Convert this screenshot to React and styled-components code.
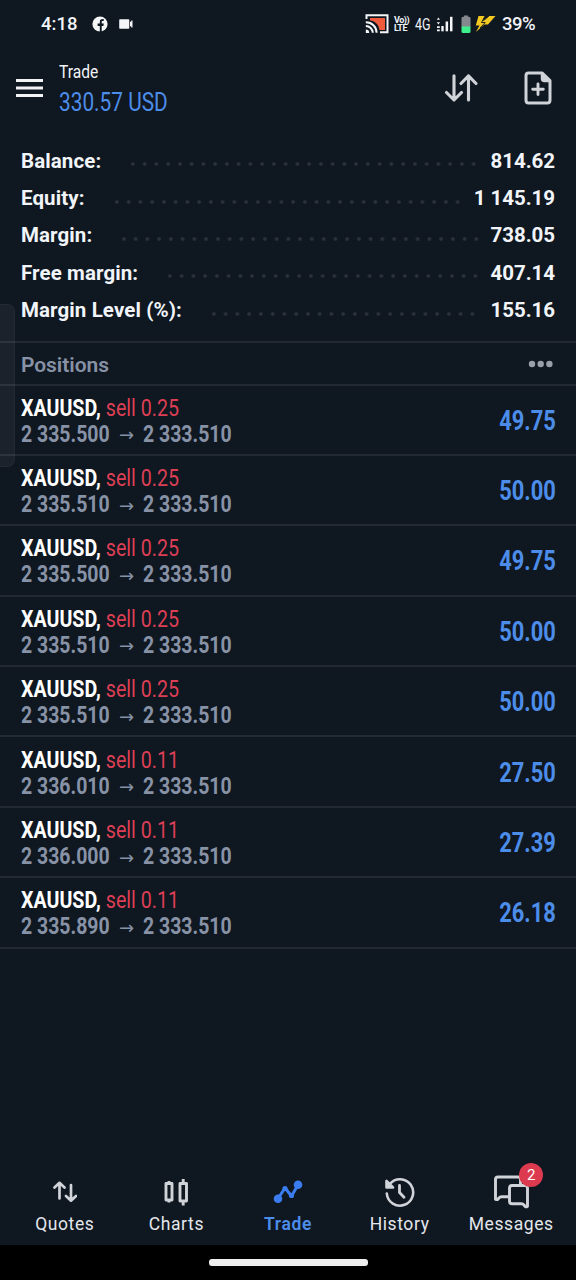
import styled, { createGlobalStyle } from 'styled-components';

const GlobalStyle = createGlobalStyle`
* {
  box-sizing: border-box;
}
body {
  margin: 0;
  background-color: #0f1720;
  font-family: Roboto, sans-serif;
}
`

const Screen = styled.div`
width: 576px;
height: 1280px;
display: flex;
flex-direction: column;
background-color: #0f1720;
color: #f1f4f8;
overflow: hidden;
position: relative;
`

/* Narrow text: the regular face squeezed horizontally */
const Narrow = styled.span`
display: block;
width: max-content;
white-space: pre;
transform: scaleX(${(p) => p.$squeeze});
transform-origin: ${(p) => p.$origin || 'left'} center;
`

const StatusBar = styled.div`
height: 48px;
display: flex;
justify-content: space-between;
padding: 0 41px;
`

const StatusGroup = styled.div`
display: flex;
align-items: center;
height: 48px;
`

const Clock = styled.span`
font-size: 18.5px;
font-weight: 500;
margin-right: 16px;
width: 35px;
`

const Volte = styled.div`
width: 16px;
margin-left: 5px;
font-size: 9px;
line-height: 8px;
font-weight: 700;
letter-spacing: -0.5px;
`

const Network = styled.span`
font-size: 16px;
margin: 0 4px 0 5px;
width: 17px;
`

const Percent = styled.span`
font-size: 18.5px;
margin-left: 6px;
width: 33px;
white-space: nowrap;
letter-spacing: -0.5px;
font-weight: 500;
`

const Header = styled.header`
height: 94px;
display: flex;
align-items: flex-start;
padding: 0 24px 0 16px;
`

const HeaderText = styled.div`
flex: 1;
margin-left: 16px;
`

const HeaderTitle = styled.div`
font-size: 19px;
line-height: 24px;
margin-top: 12px;
`

const HeaderProfit = styled.div`
font-size: 25px;
line-height: 30px;
margin-top: 4px;
color: #4d8dea;
`

const Summary = styled.section`
height: 199px;
padding: 0 21px;
`

const SummaryRow = styled.div`
height: 37.4px;
display: flex;
align-items: center;
font-size: 20.5px;
font-weight: 700;
`

const SummaryLabel = styled.span`
letter-spacing: 0.1px;
`

const SummaryValue = styled.span`
letter-spacing: -0.05px;
`

const Dots = styled.div`
flex: 1;
height: 6px;
margin: 7px 12px 0 26px;
background-image: radial-gradient(circle at center, #2b323b 1.3px, transparent 2.3px);
background-size: 11.75px 6px;
`

const SectionHeader = styled.div`
height: 44.5px;
display: flex;
align-items: center;
justify-content: space-between;
padding: 2px 23px 0 21px;
border-top: 2px solid #222932;
border-bottom: 2px solid #222932;
color: #8792a6;
font-size: 21px;
font-weight: 600;
`

const SectionTitle = styled.span`
padding-top: 1px;
letter-spacing: -0.05px;
`

const Position = styled.div`
height: 70.4px;
display: flex;
justify-content: space-between;
align-items: center;
padding: 2px 20px 0 21px;
border-bottom: 2px solid #222932;
`

const Deal = styled.div`
font-size: 23.5px;
line-height: 26px;
`

const Symbol = styled.b`
color: #fff;
`

const Side = styled.span`
color: #dc3f55;
`

const Prices = styled.div`
display: flex;
align-items: center;
font-size: 23.5px;
line-height: 26px;
font-weight: 700;
color: #8792a6;
`

const Price = styled.div`
width: 89px;
`

const Arrow = styled.span`
width: 33px;
padding: 3px 0 0 9px;
font-size: 18px;
line-height: 20px;
font-family: "DejaVu Sans", sans-serif;
font-weight: 400;
`

const Profit = styled.div`
font-size: 27px;
font-weight: 700;
color: #4d8dea;
`

const TabBar = styled.nav`
height: 95px;
margin-top: auto;
display: flex;
padding: 0 9px;
`

const Tab = styled.div`
flex: 1;
display: flex;
flex-direction: column;
align-items: center;
color: ${(p) => (p.$active ? '#4d8dea' : '#e3e7ec')};
font-size: 17.5px;
font-weight: ${(p) => (p.$active ? 600 : 400)};
letter-spacing: 0.6px;
`

const TabIcon = styled.div`
height: 40px;
margin-top: 22px;
margin-bottom: 2px;
display: flex;
align-items: center;
position: relative;
`

const Badge = styled.span`
position: absolute;
top: -9px;
right: -14px;
width: 24px;
height: 24px;
border-radius: 50%;
background-color: #dc3a4e;
color: #fff;
font-size: 15px;
line-height: 24px;
letter-spacing: 0;
text-align: center;
`

const HomeArea = styled.div`
height: 35px;
background-color: #000;
display: flex;
justify-content: center;
padding-top: 14px;
`

const HomeBar = styled.div`
width: 159px;
height: 6.5px;
border-radius: 3px;
background-color: #efefef;
`

const EdgePanel = styled.div`
position: absolute;
left: -10px;
top: 304px;
width: 25px;
height: 163px;
border-radius: 8px;
border: 1px solid rgba(255, 255, 255, 0.04);
background-color: rgba(255, 245, 245, 0.055);
`

const summary = [
  ['Balance:', '814.62'],
  ['Equity:', '1 145.19'],
  ['Margin:', '738.05'],
  ['Free margin:', '407.14'],
  ['Margin Level (%):', '155.16'],
]

const positions = [
  { volume: '0.25', open: '2 335.500', profit: '49.75' },
  { volume: '0.25', open: '2 335.510', profit: '50.00' },
  { volume: '0.25', open: '2 335.500', profit: '49.75' },
  { volume: '0.25', open: '2 335.510', profit: '50.00' },
  { volume: '0.25', open: '2 335.510', profit: '50.00' },
  { volume: '0.11', open: '2 336.010', profit: '27.50' },
  { volume: '0.11', open: '2 336.000', profit: '27.39' },
  { volume: '0.11', open: '2 335.890', profit: '26.18' },
]

const line = { fill: 'none', stroke: '#d0d3d8', strokeLinecap: 'round', strokeLinejoin: 'round' }

const FacebookIcon = () => (
  <svg width="16" height="16" viewBox="0 0 16 16">
    <circle cx="8" cy="8" r="7.6" fill="#f5f6f8" />
    <path d="M7.8 16V9.9H5.6V7.4h2.2V5.9c0-2 1.1-2.9 2.9-2.9h1v2.1h-1c-.8 0-1 .4-1 1.1v1.2h2.1l-.4 2.5H9.7V16z" fill="#0f1720" />
  </svg>
)

const CameraIcon = () => (
  <svg width="14" height="10" viewBox="0 0 14 10" style={{ marginLeft: 11 }}>
    <path d="M1 .3h8.5q.8 0 .8.8v7.8q0 .8-.8.8H1q-.8 0-.8-.8V1.100q0-.8.8-.8z" fill="#f5f6f8" />
    <path d="M11 2.8h1.2V1.500h1.300v7h-1.300V7.200H11z" fill="#f5f6f8" />
  </svg>
)

const CastIcon = () => (
  <svg width="24" height="20" viewBox="0 0 24 20">
    <path d="M5 4h15v12h-5.500C13.500 10 10 7 5 6.500z" fill="#ee5a3c" />
    <path d="M1.500 5V1.300h21v17H15" fill="none" stroke="#f5f6f8" strokeWidth="2" />
    <path d="M.8 8.200a10.600 10.600 0 0 1 10.800 10.600M.8 12a7 7 0 0 1 7 6.800" fill="none" stroke="#f5f6f8" strokeWidth="2" />
    <path d="M.8 15.500a3.400 3.400 0 0 1 3.400 3.400H.8z" fill="#f5f6f8" />
  </svg>
)

const SignalIcon = () => (
  <svg width="17" height="16" viewBox="0 0 17 16" fill="#f5f6f8">
    <path d="M.8 3.800l1.600-2.400L4 3.800zM.8 6.200H4L2.400 8.600zM1 10.300h2.800v1.600H1zM1 13.400h2.800v1.800H1z" />
    <rect x="5.300" y="10" width="2.400" height="5.300" />
    <rect x="9.600" y="5.500" width="2.500" height="9.800" />
    <rect x="14" y=".8" width="2.500" height="14.500" />
  </svg>
)

const BatteryIcon = () => (
  <svg width="10" height="19" viewBox="0 0 10 19" style={{ marginLeft: 8 }}>
    <path d="M3 .5h4v1.300h1q1.500 0 1.500 1.500V12H.5V3.300q0-1.500 1.500-1.500h1z" fill="#85898f" />
    <path d="M.5 11.500h9v5q0 1.500-1.500 1.500H2q-1.500 0-1.500-1.500z" fill="#3df08c" />
  </svg>
)

const BoltIcon = () => (
  <svg width="21" height="18" viewBox="0 0 21 18" style={{ marginLeft: 4 }}>
    <path d="M3.500 1H10L7.500 6.200 14 1h6.500L13 9.500h-3.500L.8 17l3.700-6.500H.8z" fill="#f2c821" />
    <path d="M10 1L6.500 7.500h3.700L5 13M14 1L8.500 5.500" fill="none" stroke="#0f1720" strokeWidth=".9" />
  </svg>
)

const MenuIcon = () => (
  <svg width="27" height="20" viewBox="0 0 27 20" style={{ marginTop: 30 }}>
    <path d="M0 2.500h27M0 10h27M0 17.500h27" stroke="#f1f3f5" strokeWidth="2.800" />
  </svg>
)

const SortIcon = () => (
  <svg width="34" height="28" viewBox="0 0 34 28" style={{ marginTop: 26, marginRight: 46 }}>
    <path d="M10 1.800V26M2.500 18.500L10 26l7.500-7.500M24.500 26V1.800M17 9.500l7.500-7.700L32 9.500" {...line} strokeWidth="3.100" />
  </svg>
)

const NewOrderIcon = () => (
  <svg width="28" height="34" viewBox="0 0 28 34" style={{ marginTop: 23 }}>
    <path d="M4.500 2h13.800l7.700 7.500v19.800q0 2.700-2.700 2.700H4.500Q2 32 2 29.300V4.700Q2 2 4.500 2z" {...line} strokeWidth="3" />
    <path d="M17.500 2v5.500q0 3 3 3H26z" {...line} fill="#d0d3d8" strokeWidth="1.500" />
    <path d="M14 13v10.500M8.700 18.200h10.600" {...line} strokeWidth="2.900" />
  </svg>
)

const MoreIcon = () => (
  <svg width="25" height="8" viewBox="0 0 25 8" fill="#9aa0a9">
    <circle cx="4" cy="4" r="3.200" />
    <circle cx="12.700" cy="4" r="3.200" />
    <circle cx="21.400" cy="4" r="3.200" />
  </svg>
)

const QuotesIcon = () => (
  <svg width="24" height="22" viewBox="0 0 24 22">
    <path d="M6.500 17.500V2M1.500 6.500L6.500 1.800l5 4.700M18 4v15.500M13 15l5 4.700 5-4.700" {...line} strokeWidth="2.700" />
  </svg>
)

const ChartsIcon = () => (
  <svg width="24" height="28" viewBox="0 0 24 28">
    <path d="M2 5.500h6v16.500H2zM5 3v2.500M5 22v2.500M16 5.500h6.500v17.500H16zM19.200 1v4.500M19.200 23v4.500" {...line} strokeLinecap="butt" strokeLinejoin="round" strokeWidth="2.900" />
  </svg>
)

const TradeIcon = () => (
  <svg width="30" height="24" viewBox="0 0 30 24">
    <path d="M5 18.500L12 8l6.500 8L25 5" fill="none" stroke="#3b7df0" strokeWidth="3" strokeLinejoin="round" />
    <circle cx="5" cy="18.700" r="4.300" fill="#3b7df0" />
    <circle cx="25" cy="4.800" r="4.300" fill="#3b7df0" />
    <circle cx="12" cy="8.500" r="2.600" fill="#3b7df0" />
    <circle cx="18.500" cy="15.500" r="2.600" fill="#3b7df0" />
  </svg>
)

const HistoryIcon = () => (
  <svg width="32" height="32" viewBox="0 0 32 32">
    <path d="M2.800 17.500a13.200 13.200 0 1 0 3-9.500L3.500 10.500M2.500 5v6.500h6.500z" {...line} strokeWidth="2.600" />
    <path d="M15.500 9.500v7l4.500 4.800" {...line} strokeWidth="2.800" />
  </svg>
)

const MessagesIcon = () => (
  <svg width="36" height="34" viewBox="0 0 36 34">
    <path d="M15 21.700H8.500q-1.500 0-2.500 1.200l-1 1.300q-1.200.8-2.500 0V4.500Q2.500 2 5 2h20q2.500 0 2.500 2.500v5" {...line} strokeWidth="2.900" />
    <path d="M19 10.500h13q2.500 0 2.500 2.500v18.300q-1.300 1-2.500 0l-1-1.300q-1-1.200-2.500-1.200H19q-2.500 0-2.500-2.500V13q0-2.500 2.500-2.500z" {...line} strokeWidth="2.900" />
  </svg>
)

const tabs = [
  { label: 'Quotes', Icon: QuotesIcon },
  { label: 'Charts', Icon: ChartsIcon },
  { label: 'Trade', Icon: TradeIcon, active: true },
  { label: 'History', Icon: HistoryIcon },
  { label: 'Messages', Icon: MessagesIcon, badge: 2 },
]

function App() {
  return (
    <Screen>
      <GlobalStyle />
      <StatusBar>
        <StatusGroup>
          <Clock>4:18</Clock>
          <FacebookIcon />
          <CameraIcon />
        </StatusGroup>
        <StatusGroup>
          <CastIcon />
          <Volte>Vo)) LTE</Volte>
          <Network><Narrow $squeeze={0.78}>4G</Narrow></Network>
          <SignalIcon />
          <BatteryIcon />
          <BoltIcon />
          <Percent>39%</Percent>
        </StatusGroup>
      </StatusBar>
      <Header>
        <MenuIcon />
        <HeaderText>
          <HeaderTitle><Narrow $squeeze={0.82}>Trade</Narrow></HeaderTitle>
          <HeaderProfit><Narrow $squeeze={0.833}>330.57 USD</Narrow></HeaderProfit>
        </HeaderText>
        <SortIcon />
        <NewOrderIcon />
      </Header>
      <Summary>
        {summary.map(([label, value]) => (
          <SummaryRow key={label}>
            <SummaryLabel>{label}</SummaryLabel>
            <Dots />
            <SummaryValue>{value}</SummaryValue>
          </SummaryRow>
        ))}
      </Summary>
      <SectionHeader>
        <SectionTitle>Positions</SectionTitle>
        <MoreIcon />
      </SectionHeader>
      {positions.map((p, i) => (
        <Position key={i}>
          <div>
            <Deal>
              <Narrow $squeeze={0.835}><Symbol>XAUUSD,</Symbol> <Side>{`sell ${p.volume}`}</Side></Narrow>
            </Deal>
            <Prices>
              <Price><Narrow $squeeze={0.828}>{p.open}</Narrow></Price>
              <Arrow>→</Arrow>
              <Price><Narrow $squeeze={0.828}>2 333.510</Narrow></Price>
            </Prices>
          </div>
          <Profit><Narrow $squeeze={0.81} $origin="right">{p.profit}</Narrow></Profit>
        </Position>
      ))}
      <TabBar>
        {tabs.map(({ label, Icon, active, badge }) => (
          <Tab key={label} $active={active}>
            <TabIcon>
              <Icon />
              {badge ? <Badge>{badge}</Badge> : ''}
            </TabIcon>
            {label}
          </Tab>
        ))}
      </TabBar>
      <HomeArea>
        <HomeBar />
      </HomeArea>
      <EdgePanel />
    </Screen>
  )
}

export default App;
